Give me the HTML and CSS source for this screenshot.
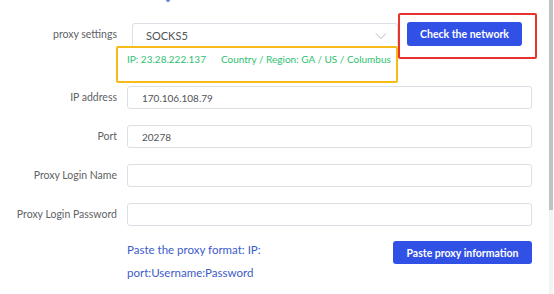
FILE: index.html
```html
<!DOCTYPE html>
<html lang="en">
<head>
  <meta charset="UTF-8" />
  <title>Proxy settings</title>
  <link rel="stylesheet" href="styles.css">
</head>
<body>
  <div class="page">
    <span class="tab-mark"></span>
    <form class="proxy-form">
      <div class="row row-top">
        <label class="label">proxy settings</label>
        <div class="select">
          <span>SOCKS5</span>
          <svg class="chevron" width="12" height="8" viewBox="0 0 12 8"><path d="M1 1.5 L6 6.5 L11 1.5" fill="none" stroke="#b4b8c0" stroke-width="1"/></svg>
        </div>
        <div class="mark-red">
          <button type="button" class="btn">Check the network</button>
        </div>
      </div>
      <div class="mark-yellow">
        <span>IP: 23.28.222.137</span>
        <span>Country / Region: GA / US / Columbus</span>
      </div>
      <div class="row">
        <label class="label">IP address</label>
        <input class="input" value="170.106.108.79">
      </div>
      <div class="row">
        <label class="label">Port</label>
        <input class="input" value="20278">
      </div>
      <div class="row">
        <label class="label">Proxy Login Name</label>
        <input class="input" value="">
      </div>
      <div class="row">
        <label class="label">Proxy Login Password</label>
        <input class="input" value="">
      </div>
      <div class="paste-row">
        <p class="hint">Paste the proxy format: IP:<br>port:Username:Password</p>
        <button type="button" class="btn btn-paste">Paste proxy information</button>
      </div>
    </form>
    <div class="scrollbar"><div class="thumb"></div></div>
  </div>
</body>
</html>
```

FILE: styles.css
```css
body {
  margin: 0;
  background: #fff;
  font-family: Lato, "Noto Sans", sans-serif;
  font-size: 10.5px;
  color: #606266;
}
.page {
  position: relative;
  width: 554px;
  height: 294px;
  overflow: hidden;
}
.tab-mark {
  position: absolute;
  left: 166px;
  top: 0;
  width: 4px;
  height: 2px;
  background: #6a7fd8;
  border-radius: 0 0 2px 2px;
}
.proxy-form {
  padding-top: 23px;
}
.row {
  display: flex;
  align-items: center;
  height: 23px;
  margin-bottom: 16px;
}
.label {
  width: 127px;
  text-align: right;
  padding-right: 10px;
  box-sizing: border-box;
  white-space: nowrap;
  line-height: 23px;
  flex: none;
}
.row-top {
  align-items: flex-start;
  margin-bottom: 0;
}
.select {
  width: 266px;
  height: 23px;
  box-sizing: border-box;
  margin-left: 5px;
  border: 1px solid #dcdfe6;
  border-bottom: none;
  border-radius: 3px 3px 0 0;
  display: flex;
  align-items: center;
  justify-content: space-between;
  padding: 0 10px 0 13px;
  color: #505358;
  font-size: 11px;
  flex: none;
}
.chevron {
  margin-top: 1px;
}
.mark-red {
  margin-top: -10px;
  width: 139px;
  height: 46px;
  box-sizing: border-box;
  border: 2px solid #e8322e;
  border-radius: 2px;
  padding: 7px 0 0 7px;
  flex: none;
}
.btn {
  font-family: inherit;
  font-size: 10.5px;
  font-weight: bold;
  color: #fff;
  background: #3050e6;
  border: none;
  border-radius: 3px;
  height: 24px;
  padding: 0;
  cursor: pointer;
}
.mark-red .btn {
  width: 115px;
}
.mark-yellow {
  margin-left: 116px;
  width: 282px;
  height: 37px;
  box-sizing: border-box;
  border: 2px solid #f6bb16;
  border-radius: 2px;
  padding: 5px 0 0 9px;
  color: #2fbf71;
  font-size: 10px;
  display: flex;
  gap: 15px;
  white-space: nowrap;
  margin-bottom: 3px;
}
.input {
  width: 405px;
  height: 23px;
  box-sizing: border-box;
  border: 1px solid #dcdfe6;
  border-radius: 3px;
  padding: 0 0 0 14px;
  font-family: inherit;
  font-size: 10px;
  color: #505358;
  outline: none;
}
.paste-row {
  display: flex;
  justify-content: space-between;
  align-items: flex-start;
  width: 532px;
  padding-left: 127px;
  box-sizing: border-box;
  margin-top: -4px;
}
.hint {
  margin: 0;
  color: #3d5bc9;
  font-size: 11.5px;
  line-height: 23px;
}
.btn-paste {
  width: 139px;
  height: 23px;
  margin-top: 3px;
}
.scrollbar {
  position: absolute;
  right: 1px;
  top: 0;
  width: 4px;
  height: 294px;
  background: #f3f3f3;
}
.thumb {
  height: 210px;
  background: #c2c2c2;
}
```
